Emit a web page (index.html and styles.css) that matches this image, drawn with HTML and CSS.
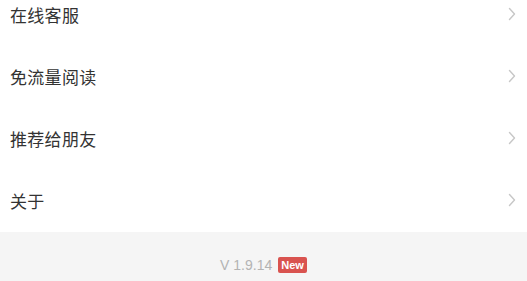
FILE: index.html
```html
<!DOCTYPE html>
<html lang="zh">
<head>
<meta charset="utf-8">
<link rel="stylesheet" href="styles.css">
</head>
<body>
<div class="page">
  <ul class="menu">
    <li class="item"><span class="label">在线客服</span><svg class="chev" viewBox="0 0 8 14" width="8" height="14"><path d="M1.5 1.5 L6.5 7 L1.5 12.5" fill="none" stroke="#c7c7c7" stroke-width="1.4" stroke-linecap="round" stroke-linejoin="round"/></svg></li>
    <li class="item"><span class="label">免流量阅读</span><svg class="chev" viewBox="0 0 8 14" width="8" height="14"><path d="M1.5 1.5 L6.5 7 L1.5 12.5" fill="none" stroke="#c7c7c7" stroke-width="1.4" stroke-linecap="round" stroke-linejoin="round"/></svg></li>
    <li class="item"><span class="label">推荐给朋友</span><svg class="chev" viewBox="0 0 8 14" width="8" height="14"><path d="M1.5 1.5 L6.5 7 L1.5 12.5" fill="none" stroke="#c7c7c7" stroke-width="1.4" stroke-linecap="round" stroke-linejoin="round"/></svg></li>
    <li class="item"><span class="label">关于</span><svg class="chev" viewBox="0 0 8 14" width="8" height="14"><path d="M1.5 1.5 L6.5 7 L1.5 12.5" fill="none" stroke="#c7c7c7" stroke-width="1.4" stroke-linecap="round" stroke-linejoin="round"/></svg></li>
  </ul>
  <div class="footer">
    <span class="version">V 1.9.14</span><span class="badge">New</span>
  </div>
</div>
</body>
</html>
```
FILE: styles.css
```css
html, body {
  margin: 0;
  padding: 0;
  background: #ffffff;
  font-family: "Liberation Sans", "Noto Sans CJK SC", sans-serif;
}
.page {
  width: 527px;
  height: 281px;
  overflow: hidden;
  display: flex;
  flex-direction: column;
}
.menu {
  list-style: none;
  margin: -16px 0 0 0;
  padding: 0;
  background: #fff;
}
.item {
  height: 62px;
  display: flex;
  align-items: center;
  justify-content: space-between;
  padding: 0 11px 2px 10px;
  box-sizing: border-box;
}
.label {
  font-size: 17px;
  color: #333333;
  letter-spacing: 0.3px;
}
.chev {
  display: block;
}
.footer {
  flex: 1;
  background: #f5f5f5;
  display: flex;
  justify-content: center;
  align-items: flex-start;
  padding-top: 25px;
  gap: 6px;
}
.version {
  font-size: 14px;
  color: #b3b3b3;
  line-height: 16px;
}
.badge {
  background: #d9534f;
  color: #fff;
  font-size: 11px;
  font-weight: bold;
  line-height: 16px;
  padding: 0 3px;
  border-radius: 2px;
}
```
